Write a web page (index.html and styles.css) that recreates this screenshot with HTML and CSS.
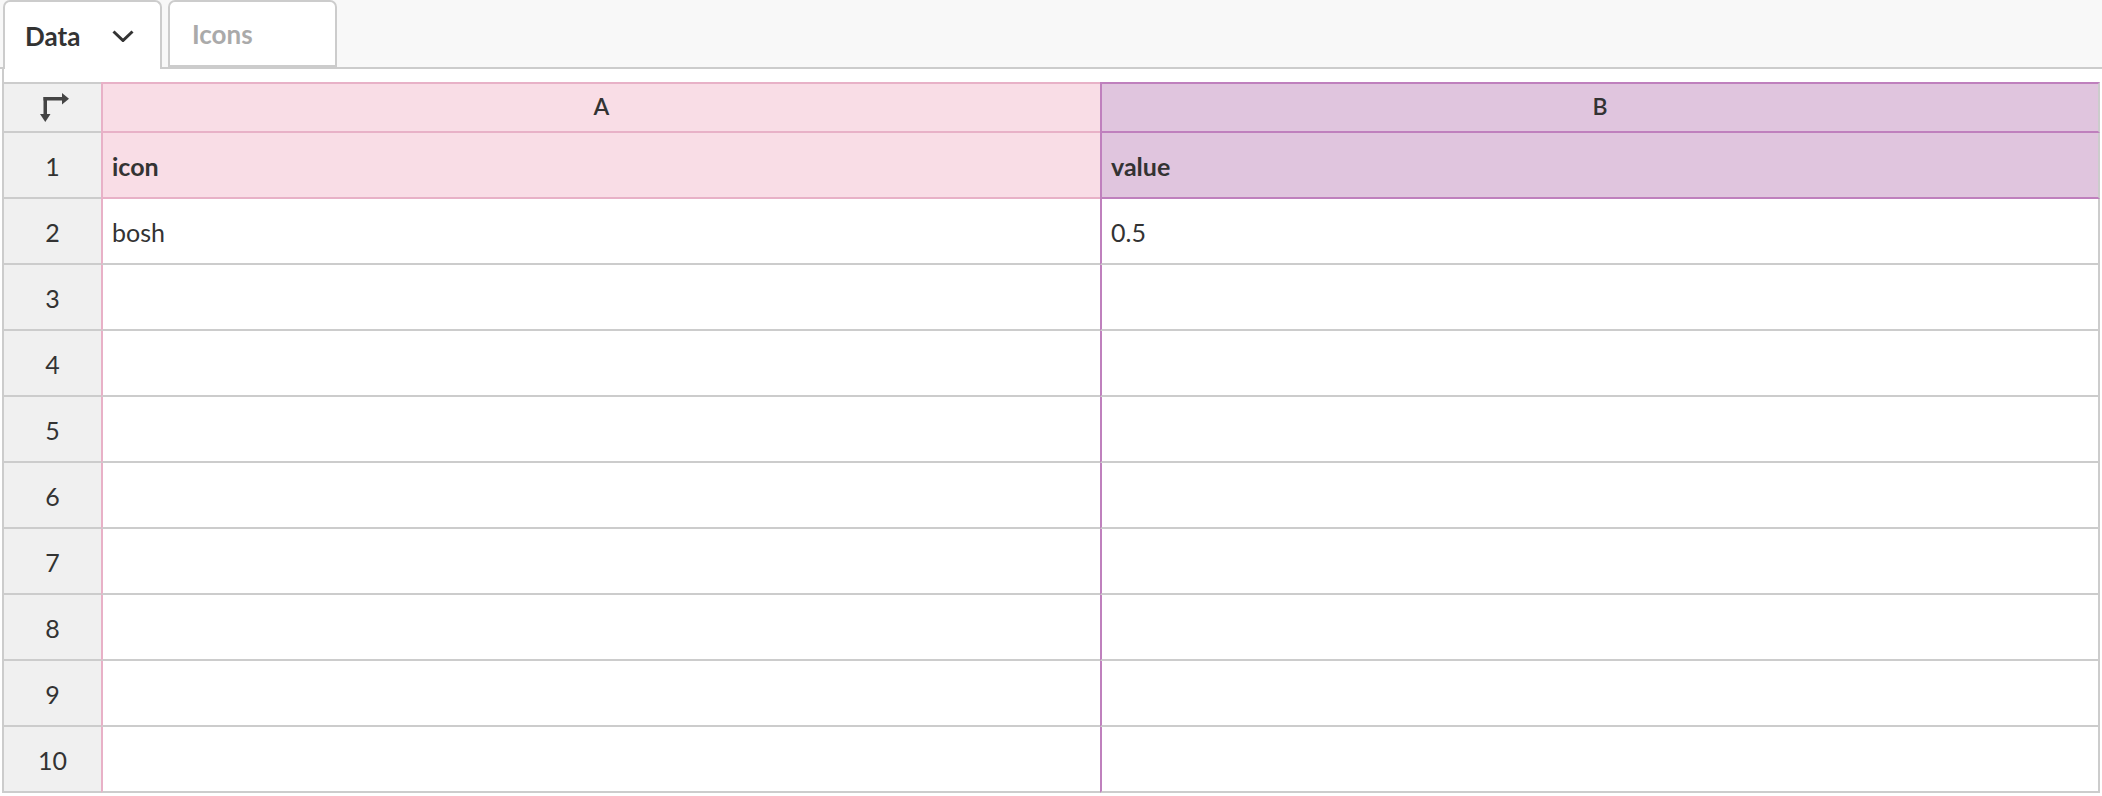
FILE: index.html
```html
<!DOCTYPE html>
<html lang="en">
<head>
  <meta charset="UTF-8">
  <title>Data</title>
  <link rel="stylesheet" href="styles.css">
</head>
<body>
  <div class="tabs">
    <div class="tab active">
      <span>Data</span>
      <svg class="chevron" width="22" height="12" viewBox="0 0 22 12">
        <polyline points="1.5,1.5 11,10.5 20.5,1.5" fill="none" stroke="#333" stroke-width="3"/>
      </svg>
    </div>
    <div class="tab">Icons</div>
  </div>

  <div class="sheet">
    <table class="grid">
      <colgroup>
        <col class="col-index">
        <col class="col-a">
        <col class="col-b">
      </colgroup>
      <thead>
        <tr class="letters">
          <th class="index">
            <svg width="30" height="30" viewBox="0 0 30 30">
              <rect x="3.5" y="4" width="3.5" height="18" fill="#444"/>
              <rect x="3.5" y="4" width="19" height="3.5" fill="#444"/>
              <polygon points="22,0 29,5.75 22,11.5" fill="#444"/>
              <polygon points="0,21 10.5,21 5.25,29" fill="#444"/>
            </svg>
          </th>
          <th class="a">A</th>
          <th class="b">B</th>
        </tr>
      </thead>
      <tbody id="rows"></tbody>
    </table>
  </div>

  <script>
    const rows = [
      ['icon', 'value'],
      ['bosh', '0.5']
    ];

    const body = document.getElementById('rows');
    for (let i = 0; i < 10; i++) {
      const data = rows[i] || ['', ''];
      const tr = document.createElement('tr');
      if (i === 0) tr.className = 'head';
      tr.innerHTML =
        '<td class="index">' + (i + 1) + '</td>' +
        '<td class="a">' + data[0] + '</td>' +
        '<td class="b">' + data[1] + '</td>';
      body.appendChild(tr);
    }
  </script>
</body>
</html>
```

FILE: styles.css
```css
body {
  margin: 0;
  font-family: Lato, "Open Sans", sans-serif;
  color: #333;
  background: white;
}

.tabs {
  display: flex;
  gap: 6px;
  height: 67px;
  padding-left: 3px;
  background: #f8f8f8;
  border-bottom: 2px solid #ccc;
}

.tab {
  display: flex;
  align-items: center;
  box-sizing: border-box;
  width: 169px;
  height: 67px;
  padding-left: 22px;
  background: white;
  border: 2px solid #ccc;
  border-radius: 7px 7px 0 0;
  font-size: 26px;
  font-weight: bold;
  color: #aaa;
}

.tab.active {
  width: 159px;
  height: 69px;
  padding-left: 20px;
  border-bottom: none;
  color: #333;
}

.tab .chevron {
  margin-left: 32px;
}

.sheet {
  margin-left: 2px;
  padding-top: 13px;
  border-left: 2px solid #ccc;
}

.grid {
  margin-left: -2px;
  border-collapse: separate;
  border-spacing: 0;
  table-layout: fixed;
  width: 2098px;
  font-size: 25px;
}

.col-index { width: 99px; }
.col-a { width: 999px; }
.col-b { width: 1000px; }

.grid th,
.grid td {
  height: 66px;
  padding: 2px 0 0 9px;
  box-sizing: border-box;
  border-bottom: 2px solid #ccc;
  white-space: nowrap;
}

.grid .letters th {
  height: 51px;
  padding: 0 0 4px;
  border-top: 2px solid #ccc;
  font-weight: 600;
  font-size: 23px;
  text-align: center;
  vertical-align: middle;
}

.grid .letters th.index {
  padding: 0;
}

.grid .letters th.index svg {
  display: block;
  margin: 0 auto;
  position: relative;
  left: 2px;
}

.grid .index {
  padding: 2px 0 0;
  border-left: 2px solid #ccc;
  background: #f0f0f0;
  text-align: center;
}

.grid .a {
  border-left: 2px solid #e8b1c7;
}

.grid .b {
  border-left: 2px solid #bf80bd;
  border-right: 2px solid #ccc;
}

.grid .letters .a,
.grid .head .a {
  background: #f9dde6;
  border-top-color: #e8b1c7;
  border-bottom-color: #e8b1c7;
}

.grid .letters .b,
.grid .head .b {
  background: #e0c5de;
  border-top-color: #bf80bd;
  border-bottom-color: #bf80bd;
}

.grid .head td.a,
.grid .head td.b {
  font-weight: bold;
}
```
